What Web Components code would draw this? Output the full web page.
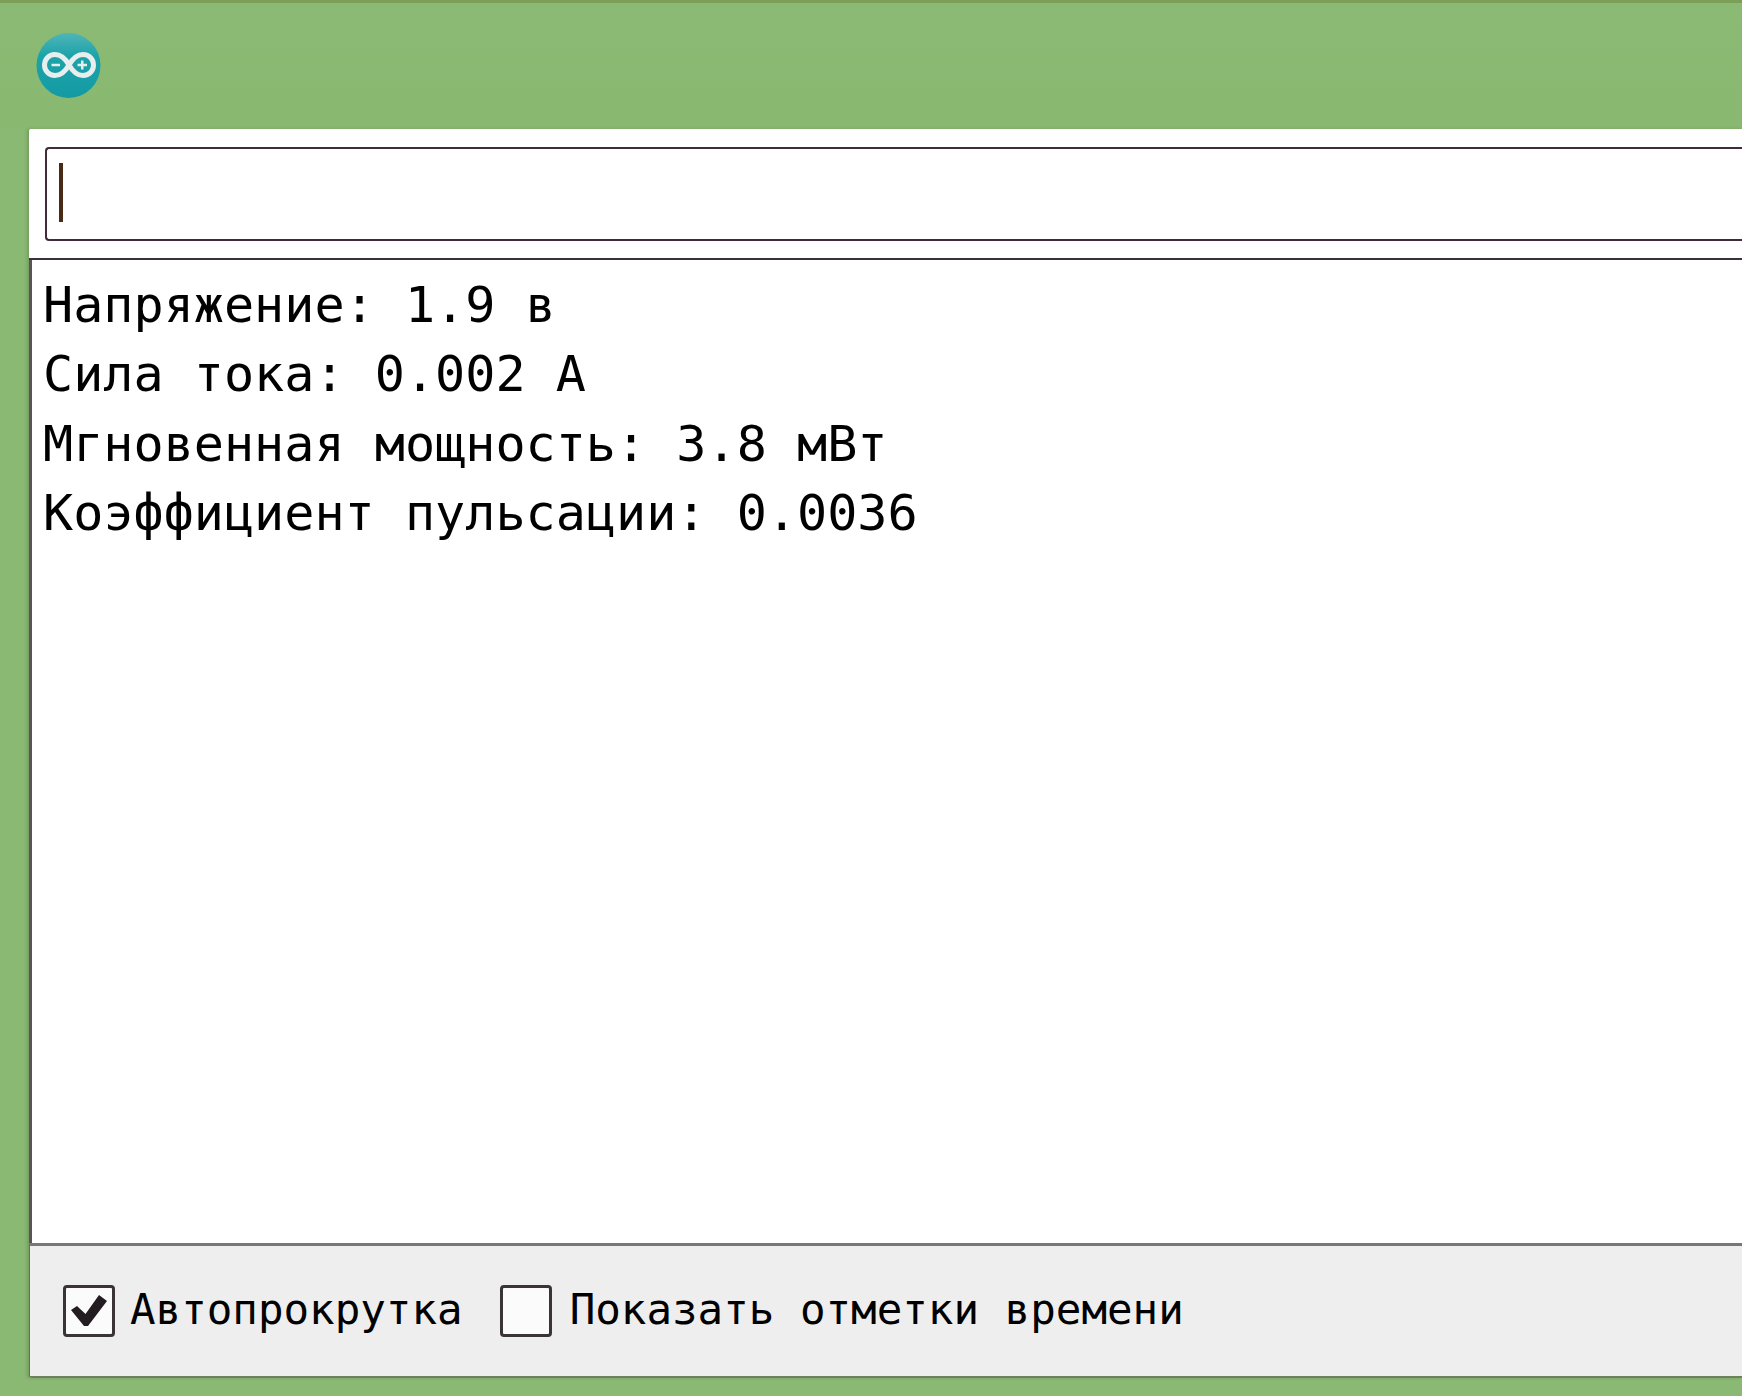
<!DOCTYPE html>
<html><head><meta charset="utf-8"><style>
html,body{margin:0;height:100%;overflow:hidden;background:#89b972}
</style></head><body>
<serial-app>
  <serial-input slot="input"></serial-input>
  <serial-output slot="output">
    <div>Напряжение: 1.9 в</div>
    <div>Сила тока: 0.002 А</div>
    <div>Мгновенная мощность: 3.8 мВт</div>
    <div>Коэффициент пульсации: 0.0036</div>
  </serial-output>
  <serial-footer slot="footer">
    <serial-check checked style="--gap:15px">Автопрокрутка</serial-check>
    <serial-check style="--gap:18px">Показать отметки времени</serial-check>
  </serial-footer>
</serial-app>
<script>
function def(name,html){customElements.define(name,class extends HTMLElement{constructor(){super();this.attachShadow({mode:'open'}).innerHTML=html}})}
def('serial-app',`<style>
:host{display:flex;flex-direction:column;width:1742px;height:1396px;box-sizing:border-box;background:#89b972;border-top:3px solid #7b9f57;font-family:"DejaVu Sans Mono",monospace}
header{height:126px;flex:none;display:flex;align-items:center;padding:0 0 0 36px;box-sizing:border-box;background:linear-gradient(#8bba75,#89b870)}
svg{display:block;margin-top:-2px}
main{flex:none;margin-left:29px;height:1249px;display:flex;flex-direction:column;box-shadow:-2px 0 3px rgba(60,80,50,.25);overflow:hidden;border-radius:2px 0 0 2px}
</style>
<header><svg width="65" height="67" viewBox="0 0 65 67">
<defs><linearGradient id="g" x1="0" y1="0" x2="0" y2="1"><stop offset="0" stop-color="#4fb5b8"/><stop offset=".35" stop-color="#1da3aa"/><stop offset="1" stop-color="#139aa3"/></linearGradient></defs>
<ellipse cx="32.5" cy="33.5" rx="32" ry="32.5" fill="url(#g)"/>
<g transform="translate(0 -1)"><path d="M33 34C29 27 25 23.500 19 23.500C12.500 23.500 8.500 28.500 8.500 34C8.500 39.500 12.500 44.500 19 44.500C25 44.500 29 41 33 34C37 27 41 23.500 47 23.500C53.500 23.500 57.500 28.500 57.500 34C57.500 39.500 53.500 44.500 47 44.500C41 44.500 37 41 33 34Z" fill="none" stroke="#e8eeee" stroke-width="5"/>
<path d="M15.500 34h8.500M41.500 34h9.500M46.250 29.500v9" stroke="#e8eeee" stroke-width="2.500"/></g>
</svg></header>
<main><slot name="input"></slot><slot name="output"></slot><slot name="footer"></slot></main>`);
def('serial-input',`<style>
:host{display:block;height:131px;box-sizing:border-box;padding:18px 0 19px 16px;background:#fff;border-bottom:2px solid #3d2f3c}
div{height:94px;box-sizing:border-box;border:2px solid #402c38;border-right:0;border-radius:4px 0 0 4px;background:#fff;padding:14px 0 0 12px}
i{display:block;width:4px;height:59px;background:#4a2a14}
</style><div><i></i></div>`);
def('serial-output',`<style>
:host{display:block;height:983px;box-sizing:border-box;background:#fff;border-left:3px solid #5a5358;padding:10px 0 0 11px;font:50.100px/69.300px "DejaVu Sans Mono",monospace;color:#000}
</style><slot></slot>`);
def('serial-footer',`<style>
:host{display:flex;align-items:center;height:135px;box-sizing:border-box;padding:0 0 0 33px;gap:37px;background:#eeeeee;border-top:3px solid #77777a;border-bottom:2px solid #6e7f5e;border-left:1px solid #6a6a62}
</style><slot></slot>`);
customElements.define('serial-check',class extends HTMLElement{constructor(){super();this.attachShadow({mode:'open'}).innerHTML=`<style>
:host{display:flex;align-items:center;gap:var(--gap);font:42.500px/52px "DejaVu Sans Mono",monospace;color:#000;white-space:pre}
b{display:flex;width:52px;height:52px;box-sizing:border-box;border:3px solid #3a3436;border-radius:4px;background:#fbfbfb;align-items:center;justify-content:center}
span{margin-bottom:3px}
svg{display:none}
:host([checked]) svg{display:block}
</style><b><svg width="36" height="32" viewBox="0 0 36 32"><path d="M0 15L6 11L14.500 19L28 0L36 6L17 31H13Z" fill="#231c20"/></svg></b><span><slot></slot></span>`}});
</script>
</body></html>
